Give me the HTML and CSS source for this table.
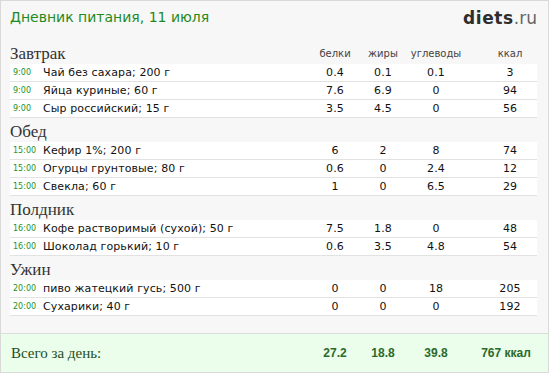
FILE: index.html
```html
<!DOCTYPE html>
<html lang="ru">
<head>
<meta charset="utf-8">
<title>Дневник питания</title>
<link rel="stylesheet" href="styles.css">
</head>
<body>
<div class="page">
  <header class="top">
    <h1 class="title">Дневник питания, 11 июля</h1>
    <div class="logo"><span class="logo-b">diets</span>.ru</div>
  </header>

  <section class="meal">
    <div class="meal-head">
      <h2 class="meal-name">Завтрак</h2>
      <span class="col">белки</span><span class="col">жиры</span><span class="col">углеводы</span><span class="col kcal">ккал</span>
    </div>
    <div class="row"><span class="time">9:00</span><span class="food">Чай без сахара; 200 г</span><span class="num">0.4</span><span class="num">0.1</span><span class="num">0.1</span><span class="num kcal">3</span></div>
    <div class="row"><span class="time">9:00</span><span class="food">Яйца куриные; 60 г</span><span class="num">7.6</span><span class="num">6.9</span><span class="num">0</span><span class="num kcal">94</span></div>
    <div class="row"><span class="time">9:00</span><span class="food">Сыр российский; 15 г</span><span class="num">3.5</span><span class="num">4.5</span><span class="num">0</span><span class="num kcal">56</span></div>
  </section>

  <section class="meal">
    <div class="meal-head"><h2 class="meal-name">Обед</h2></div>
    <div class="row"><span class="time">15:00</span><span class="food">Кефир 1%; 200 г</span><span class="num">6</span><span class="num">2</span><span class="num">8</span><span class="num kcal">74</span></div>
    <div class="row"><span class="time">15:00</span><span class="food">Огурцы грунтовые; 80 г</span><span class="num">0.6</span><span class="num">0</span><span class="num">2.4</span><span class="num kcal">12</span></div>
    <div class="row"><span class="time">15:00</span><span class="food">Свекла; 60 г</span><span class="num">1</span><span class="num">0</span><span class="num">6.5</span><span class="num kcal">29</span></div>
  </section>

  <section class="meal">
    <div class="meal-head"><h2 class="meal-name">Полдник</h2></div>
    <div class="row"><span class="time">16:00</span><span class="food">Кофе растворимый (сухой); 50 г</span><span class="num">7.5</span><span class="num">1.8</span><span class="num">0</span><span class="num kcal">48</span></div>
    <div class="row"><span class="time">16:00</span><span class="food">Шоколад горький; 10 г</span><span class="num">0.6</span><span class="num">3.5</span><span class="num">4.8</span><span class="num kcal">54</span></div>
  </section>

  <section class="meal">
    <div class="meal-head"><h2 class="meal-name">Ужин</h2></div>
    <div class="row"><span class="time">20:00</span><span class="food">пиво жатецкий гусь; 500 г</span><span class="num">0</span><span class="num">0</span><span class="num">18</span><span class="num kcal">205</span></div>
    <div class="row"><span class="time">20:00</span><span class="food">Сухарики; 40 г</span><span class="num">0</span><span class="num">0</span><span class="num">0</span><span class="num kcal">192</span></div>
  </section>

  <footer class="total">
    <span class="total-label">Всего за день:</span>
    <span class="tnum">27.2</span><span class="tnum">18.8</span><span class="tnum">39.8</span><span class="tnum kcal">767 ккал</span>
  </footer>
</div>
</body>
</html>
```

FILE: styles.css
```css
html, body {
  margin: 0;
  padding: 0;
  background: #ffffff;
}

.page {
  width: 547px;
  height: 371px;
  border: 1px solid #d9d9d9;
  background: #f7f7f7;
  display: flex;
  flex-direction: column;
  font-family: "DejaVu Sans", Verdana, sans-serif;
  color: #111;
}

.top {
  height: 39px;
  display: flex;
  justify-content: space-between;
  align-items: flex-start;
  padding: 0 11px 0 9px;
}

.title {
  margin: 7px 0 0;
  font-family: "DejaVu Sans", sans-serif;
  font-weight: normal;
  font-size: 14px;
  color: #1f8a1f;
  line-height: 18px;
}

.logo {
  margin-top: 8px;
  font-family: "DejaVu Sans", sans-serif;
  font-size: 17px;
  line-height: 18px;
  color: #666;
}

.logo-b {
  font-weight: bold;
  color: #2e2e2e;
  letter-spacing: 0.6px;
}

.meal {
  padding: 0 11px 0 9px;
}

.meal-head,
.row,
.total {
  display: grid;
  grid-template-columns: 33px 268px 48px 48px 58px 72px;
  align-items: end;
}

.meal-head {
  height: 24px;
}

.meal-name {
  grid-column: 1 / 3;
  margin: 0;
  font-family: "Liberation Serif", "Times New Roman", serif;
  font-weight: normal;
  font-size: 17px;
  line-height: 20px;
  color: #333;
}

.col {
  text-align: center;
  font-size: 10px;
  line-height: 14px;
  color: #444;
  padding-bottom: 3px;
}

.kcal {
  padding-left: 18px;
}

.row {
  height: 17px;
  background: #ffffff;
  border-bottom: 1px solid #e2e2e2;
  align-items: center;
  font-size: 11px;
  letter-spacing: 0.1px;
}

.time {
  font-size: 8px;
  letter-spacing: 0;
  color: #22931f;
  padding-left: 3px;
}

.food {
  white-space: nowrap;
}

.num {
  text-align: center;
}

.total {
  margin-top: auto;
  height: 38px;
  border-top: 1px solid #dcdcdc;
  background: #ebfdeb;
  padding: 0 11px 0 9px;
  align-items: center;
}

.total-label {
  grid-column: 1 / 3;
  font-family: "Liberation Serif", "Times New Roman", serif;
  font-size: 15px;
  color: #1d4f1d;
  padding-left: 1px;
}

.tnum {
  text-align: center;
  font-family: "Liberation Sans", Arial, sans-serif;
  font-weight: bold;
  font-size: 12px;
  color: #2a6a2a;
}

.tnum.kcal {
  padding-left: 10px;
}
```
